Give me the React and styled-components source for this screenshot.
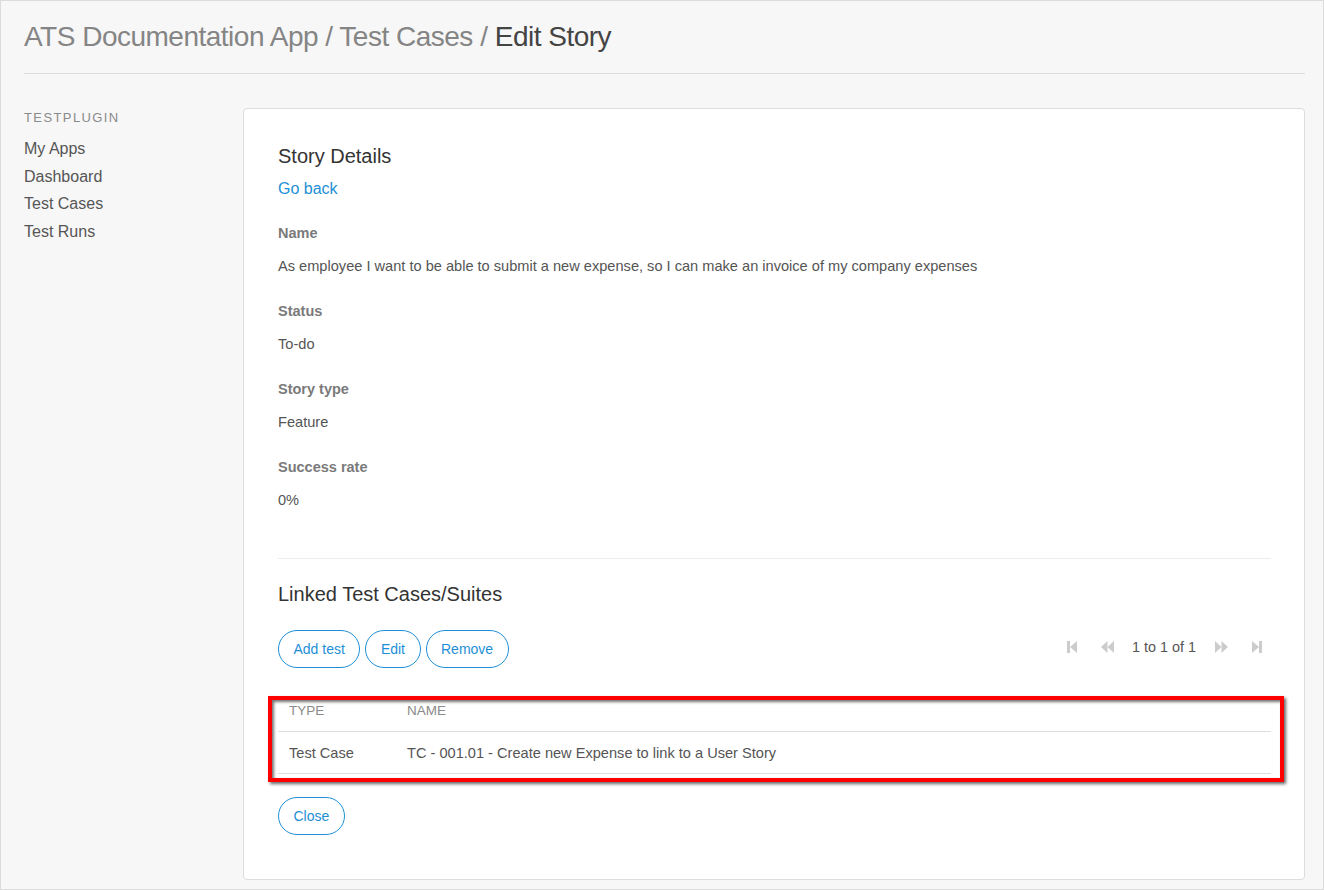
import styled, { createGlobalStyle } from "styled-components";

const GlobalStyle = createGlobalStyle`
  body {
    margin: 0;
    font-family: "Liberation Sans", Arial, sans-serif;
    background: #f7f7f7;
  }
  * {
    box-sizing: border-box;
  }
`;

const fields = [
  {
    label: "Name",
    value:
      "As employee I want to be able to submit a new expense, so I can make an invoice of my company expenses",
  },
  { label: "Status", value: "To-do" },
  { label: "Story type", value: "Feature" },
  { label: "Success rate", value: "0%" },
];

const menu = ["My Apps", "Dashboard", "Test Cases", "Test Runs"];

const FirstIcon = () => (
  <svg width="10" height="12" viewBox="0 0 10 12">
    <rect x="0" y="0" width="3" height="12" fill="currentColor" />
    <path d="M10 0 L3 6 L10 12 Z" fill="currentColor" />
  </svg>
);

const PrevIcon = () => (
  <svg width="13" height="12" viewBox="0 0 13 12">
    <path d="M6.5 0 L0 6 L6.5 12 Z" fill="currentColor" />
    <path d="M13 0 L6.5 6 L13 12 Z" fill="currentColor" />
  </svg>
);

const NextIcon = () => (
  <svg width="13" height="12" viewBox="0 0 13 12">
    <path d="M0 0 L6.5 6 L0 12 Z" fill="currentColor" />
    <path d="M6.5 0 L13 6 L6.5 12 Z" fill="currentColor" />
  </svg>
);

const LastIcon = () => (
  <svg width="10" height="12" viewBox="0 0 10 12">
    <path d="M0 0 L7 6 L0 12 Z" fill="currentColor" />
    <rect x="7" y="0" width="3" height="12" fill="currentColor" />
  </svg>
);

const App = () => {
  return (
    <>
      <GlobalStyle />
      <Frame>
        <Header>
          <Title>
            <Crumb>ATS Documentation App / Test Cases / </Crumb>
            <Current>Edit Story</Current>
          </Title>
        </Header>
        <Body>
          <Sidebar>
            <SideTitle>TESTPLUGIN</SideTitle>
            {menu.map((item) => (
              <SideItem key={item}>{item}</SideItem>
            ))}
          </Sidebar>
          <Card>
            <SectionTitle>Story Details</SectionTitle>
            <BackLink>Go back</BackLink>
            {fields.map((f) => (
              <Field key={f.label}>
                <Label>{f.label}</Label>
                <Value>{f.value}</Value>
              </Field>
            ))}
            <Divider />
            <SectionTitle>Linked Test Cases/Suites</SectionTitle>
            <Toolbar>
              <ButtonGroup>
                <PillButton>Add test</PillButton>
                <PillButton>Edit</PillButton>
                <PillButton>Remove</PillButton>
              </ButtonGroup>
              <Pager>
                <PagerIcon>
                  <FirstIcon />
                </PagerIcon>
                <PagerIcon>
                  <PrevIcon />
                </PagerIcon>
                <PagerText>1 to 1 of 1</PagerText>
                <PagerIcon>
                  <NextIcon />
                </PagerIcon>
                <PagerIcon>
                  <LastIcon />
                </PagerIcon>
              </Pager>
            </Toolbar>
            <TableWrap>
              <Table>
                <thead>
                  <tr>
                    <HeadCell $w={118}>TYPE</HeadCell>
                    <HeadCell>NAME</HeadCell>
                  </tr>
                </thead>
                <tbody>
                  <tr>
                    <Cell>Test Case</Cell>
                    <Cell>TC - 001.01 - Create new Expense to link to a User Story</Cell>
                  </tr>
                </tbody>
              </Table>
              <Highlight />
            </TableWrap>
            <Footer>
              <PillButton>Close</PillButton>
            </Footer>
          </Card>
        </Body>
      </Frame>
    </>
  );
};

export default App;

const Frame = styled.div`
  width: 1324px;
  height: 890px;
  border: 1px solid #dcdcdc;
  padding: 0 18px 0 23px;
  background: #f7f7f7;
  display: flex;
  flex-direction: column;
`;

const Header = styled.div`
  padding: 20px 0 20px;
  border-bottom: 1px solid #dddddd;
`;

const Title = styled.h1`
  margin: 0;
  font-size: 28px;
  line-height: 32px;
  font-weight: normal;
  letter-spacing: -0.5px;
`;

const Crumb = styled.span`
  color: #858585;
`;

const Current = styled.span`
  color: #444444;
`;

const Body = styled.div`
  display: flex;
  padding-top: 34px;
  flex: 1;
  padding-bottom: 9px;
`;

const Sidebar = styled.div`
  width: 219px;
  flex-shrink: 0;
  padding-top: 2px;
`;

const SideTitle = styled.div`
  font-size: 13px;
  line-height: 16px;
  letter-spacing: 1.4px;
  color: #8a8a8a;
  margin-bottom: 9px;
`;

const SideItem = styled.div`
  font-size: 16px;
  line-height: 27.6px;
  color: #555555;
  cursor: pointer;
`;

const Card = styled.div`
  flex: 1;
  background: #ffffff;
  border: 1px solid #dddddd;
  border-radius: 4px;
  padding: 35px 33px 0 34px;
`;

const SectionTitle = styled.h2`
  margin: 0;
  font-size: 20px;
  line-height: 24px;
  font-weight: normal;
  color: #333333;
`;

const BackLink = styled.a`
  display: block;
  margin-top: 11px;
  font-size: 16px;
  line-height: 20px;
  color: #1e8fd6;
  cursor: pointer;
`;

const Field = styled.div`
  margin-top: 25px;
  & + & {
    margin-top: 27px;
  }
`;

const Label = styled.div`
  font-size: 14.5px;
  line-height: 18px;
  font-weight: bold;
  color: #7a7a7a;
`;

const Value = styled.div`
  margin-top: 15px;
  font-size: 14.6px;
  line-height: 18px;
  color: #555555;
`;

const Divider = styled.hr`
  margin: 49px 0 23px;
  border: none;
  border-top: 1px solid #ececec;
`;

const Toolbar = styled.div`
  display: flex;
  align-items: center;
  justify-content: space-between;
  margin-top: 24px;
`;

const ButtonGroup = styled.div`
  display: flex;
  gap: 5px;
`;

const PillButton = styled.button`
  height: 38px;
  padding: 0 14.5px;
  border: 1px solid #1e8fd6;
  border-radius: 19px;
  background: #ffffff;
  color: #1e8fd6;
  font-family: "Liberation Sans", Arial, sans-serif;
  font-size: 14px;
  cursor: pointer;
`;

const Pager = styled.div`
  display: flex;
  align-items: center;
  padding-right: 9px;
  gap: 24px;
  margin-top: -4px;
`;

const PagerIcon = styled.span`
  display: flex;
  color: #cccccc;
`;

const PagerText = styled.span`
  font-size: 14.4px;
  color: #555555;
  margin: 0 -5px 0 -6px;
`;

const TableWrap = styled.div`
  position: relative;
  margin-top: 22px;
`;

const Table = styled.table`
  width: 100%;
  border-collapse: collapse;
`;

const HeadCell = styled.th`
  width: ${(p) => (p.$w ? `${p.$w}px` : "auto")};
  height: 41px;
  padding: 0 0 0 11px;
  text-align: left;
  font-size: 13.5px;
  font-weight: normal;
  color: #8a8a8a;
  border-bottom: 1px solid #dddddd;
  vertical-align: middle;
`;

const Cell = styled.td`
  height: 42px;
  padding: 1px 0 0 11px;
  font-size: 14.6px;
  color: #555555;
  border-bottom: 1px solid #dddddd;
  vertical-align: middle;
`;

const Highlight = styled.div`
  position: absolute;
  left: -10px;
  right: -13px;
  top: 6px;
  bottom: -8px;
  border: 4px solid #ff0000;
  box-shadow: 2px 2px 3px rgba(0, 0, 0, 0.6), inset 2px 2px 3px rgba(0, 0, 0, 0.55);
  pointer-events: none;
`;

const Footer = styled.div`
  margin-top: 23px;
`;
